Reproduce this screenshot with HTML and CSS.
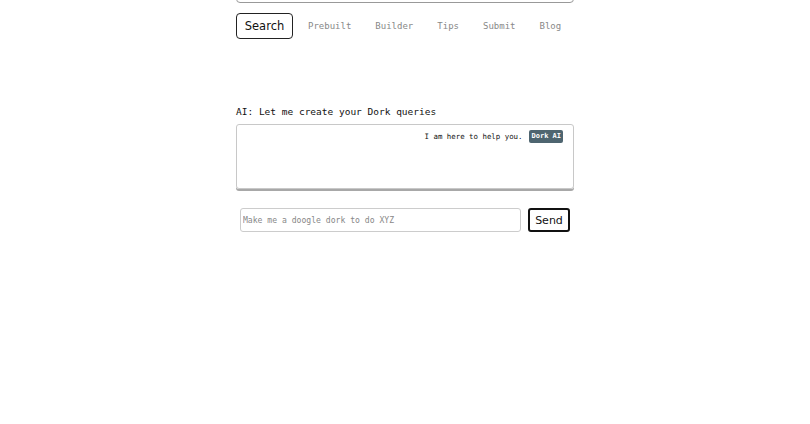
FILE: index.html
```html
<!DOCTYPE html>
<html lang="en">
<head>
  <meta charset="UTF-8" />
  <title>Dork AI</title>
  <link rel="stylesheet" href="styles.css">
</head>
<body>
  <main class="wrap">
    <input type="text" class="query" />

    <nav class="tabs">
      <button class="tab active">Search</button>
      <a class="tab" href="#">Prebuilt</a>
      <a class="tab" href="#">Builder</a>
      <a class="tab" href="#">Tips</a>
      <a class="tab" href="#">Submit</a>
      <a class="tab" href="#">Blog</a>
    </nav>

    <h2 class="ai-title">AI: Let me create your Dork queries</h2>

    <div class="chat-box">
      <div class="msg bot">
        <span class="msg-text">I am here to help you.</span>
        <span class="badge">Dork AI</span>
      </div>
    </div>

    <div class="ask">
      <input type="text" class="ask-input" placeholder="Make me a doogle dork to do XYZ" />
      <button class="send-btn">Send</button>
    </div>
  </main>
</body>
</html>
```

FILE: styles.css
```css
body {
  margin: 0;
  background: #fff;
  color: #111;
  font-family: 'DejaVu Sans Mono', monospace;
}

.wrap {
  width: 338px;
  margin: 0 auto;
  display: flex;
  flex-direction: column;
}

.query {
  box-sizing: border-box;
  height: 30px;
  margin-top: -27px;
  border: 1px solid #999;
  border-radius: 4px;
}

.tabs {
  display: flex;
  align-items: center;
  margin-top: 10px;
}

.tab {
  font-family: 'DejaVu Sans Mono', monospace;
  font-size: 9px;
  color: #888;
  text-decoration: none;
  padding: 0 12px;
}

.tab.active {
  box-sizing: border-box;
  width: 57px;
  height: 26px;
  margin-right: 3px;
  padding: 0;
  background: #fff;
  border: 1px solid #222;
  border-radius: 4px;
  color: #111;
  font-family: 'DejaVu Sans', sans-serif;
  font-size: 11.5px;
  cursor: pointer;
}

.ai-title {
  margin: 67px 0 7px;
  font-size: 9.5px;
  font-weight: normal;
  color: #111;
}

.chat-box {
  box-sizing: border-box;
  height: 65px;
  border: 1px solid #c8c8c8;
  border-radius: 3px;
  box-shadow: 0 2px 0 #a8a8a8;
  padding: 5px 10px;
}

.msg {
  display: flex;
  justify-content: flex-end;
  align-items: center;
  gap: 7px;
}

.msg-text {
  font-size: 7.4px;
}

.badge {
  background: #4e6570;
  color: #fff;
  font-size: 7px;
  line-height: 9px;
  font-weight: bold;
  padding: 2px;
  border-radius: 2px;
}

.ask {
  display: flex;
  align-items: center;
  gap: 7px;
  margin: 19px 4px 0;
}

.ask-input {
  flex: 1;
  box-sizing: border-box;
  height: 24px;
  padding: 0 2px;
  border: 1px solid #ccc;
  border-radius: 3px;
  font-family: 'DejaVu Sans Mono', monospace;
  font-size: 8.1px;
}

.ask-input::placeholder {
  color: #888;
}

.send-btn {
  box-sizing: border-box;
  width: 42px;
  height: 24px;
  background: #fff;
  border: 2px solid #111;
  border-radius: 3px;
  font-family: 'DejaVu Sans', sans-serif;
  font-size: 11px;
  color: #111;
  cursor: pointer;
  padding: 0;
}
```
